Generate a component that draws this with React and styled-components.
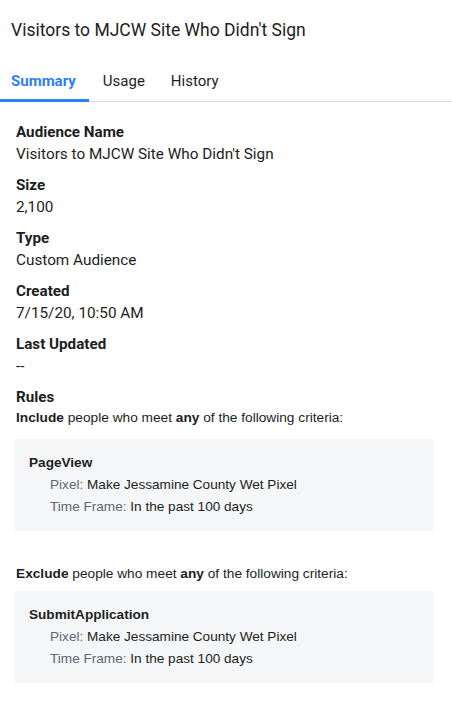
import React from "react"
import styled, { createGlobalStyle } from "styled-components"

const GlobalStyle = createGlobalStyle`
  body {
    margin: 0;
    background: #fff;
    font-family: Roboto, "Liberation Sans", sans-serif;
    color: #1c1e21;
  }
`

const Panel = styled.div`
  width: 452px;
  display: flex;
  flex-direction: column;
`

const Title = styled.h1`
  margin: 0;
  padding: 19px 11px 0;
  height: 44px;
  box-sizing: border-box;
  font-size: 17.5px;
  font-weight: 400;
  line-height: 22px;
  color: #1c1e21;
`

const Tabs = styled.div`
  display: flex;
  margin-top: 20px;
  border-bottom: 1px solid #dadde1;
`

const Tab = styled.div`
  height: 38px;
  box-sizing: border-box;
  padding: 7px ${props => props.padR}px 0 ${props => props.padL}px;
  font-size: 15px;
  line-height: 20px;
  font-weight: ${props => (props.active ? 700 : 400)};
  color: ${props => (props.active ? "#2d7ff9" : "#1c1e21")};
  border-bottom: 3px solid ${props => (props.active ? "#2d7ff9" : "transparent")};
  margin-bottom: -1px;
`

const Body = styled.div`
  padding: 19px 19px 0 16px;
  display: flex;
  flex-direction: column;
`

const Field = styled.div`
  margin-bottom: 9px;
`

const Label = styled.div`
  font-size: 15.2px;
  font-weight: 700;
  line-height: 22px;
`

const Value = styled.div`
  font-size: 15.3px;
  line-height: 22px;
`

const RuleIntro = styled.div`
  font-family: "Liberation Sans", Arial, sans-serif;
  font-size: 13.7px;
  line-height: 20px;
  margin-top: ${props => props.gap}px;
  b {
    font-weight: 700;
  }
`

const Criteria = styled.div`
  margin-top: ${props => props.gap}px;
  margin-left: -1px;
  background: #f5f6f7;
  padding: 13px 14px;
  font-family: "Liberation Sans", Arial, sans-serif;
  font-size: 13.6px;
  line-height: 22px;
`

const EventName = styled.div`
  font-weight: 700;
  color: #1c1e21;
`

const Detail = styled.div`
  padding-left: 21px;
  color: #1c1e21;
  span {
    color: #606770;
  }
`

const Rule = ({ event, gap }) => (
  <Criteria gap={gap}>
    <EventName>{event}</EventName>
    <Detail><span>Pixel:</span> Make Jessamine County Wet Pixel</Detail>
    <Detail><span>Time Frame:</span> In the past 100 days</Detail>
  </Criteria>
)

const fields = [
  ["Audience Name", "Visitors to MJCW Site Who Didn't Sign"],
  ["Size", "2,100"],
  ["Type", "Custom Audience"],
  ["Created", "7/15/20, 10:50 AM"],
  ["Last Updated", "--"],
]

export default function App() {
  return (
    <Panel>
      <GlobalStyle />
      <Title>Visitors to MJCW Site Who Didn't Sign</Title>
      <Tabs>
        <Tab active padL={11} padR={13}>Summary</Tab>
        <Tab padL={14} padR={13}>Usage</Tab>
        <Tab padL={13} padR={13}>History</Tab>
      </Tabs>
      <Body>
        {fields.map(([label, value]) => (
          <Field key={label}>
            <Label>{label}</Label>
            <Value>{value}</Value>
          </Field>
        ))}
        <Label>Rules</Label>
        <RuleIntro gap={0}>
          <b>Include</b> people who meet <b>any</b> of the following criteria:
        </RuleIntro>
        <Rule event="PageView" gap={11} />
        <RuleIntro gap={33}>
          <b>Exclude</b> people who meet <b>any</b> of the following criteria:
        </RuleIntro>
        <Rule event="SubmitApplication" gap={7} />
      </Body>
    </Panel>
  )
}
